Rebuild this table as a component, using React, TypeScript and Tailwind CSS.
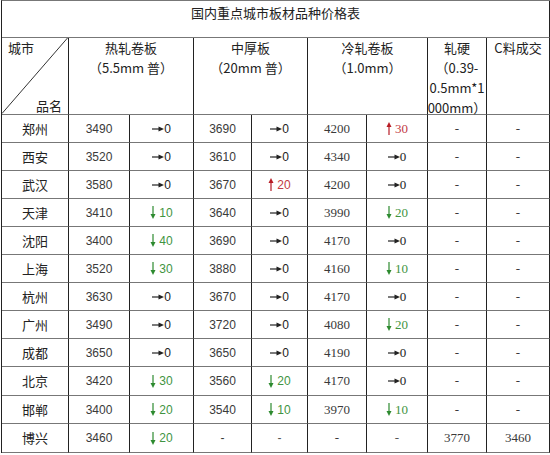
type Change = { dir: "flat" | "up" | "down"; value: string } | null;

type Row = {
  city: string;
  hot: string;
  hotChg: Change;
  mid: string;
  midChg: Change;
  cold: string;
  coldChg: Change;
  hard: string;
  c: string;
};

const flat: Change = { dir: "flat", value: "0" };
const up = (value: string): Change => ({ dir: "up", value });
const down = (value: string): Change => ({ dir: "down", value });

const rows: Row[] = [
  { city: "郑州", hot: "3490", hotChg: flat, mid: "3690", midChg: flat, cold: "4200", coldChg: up("30"), hard: "-", c: "-" },
  { city: "西安", hot: "3520", hotChg: flat, mid: "3610", midChg: flat, cold: "4340", coldChg: flat, hard: "-", c: "-" },
  { city: "武汉", hot: "3580", hotChg: flat, mid: "3670", midChg: up("20"), cold: "4200", coldChg: flat, hard: "-", c: "-" },
  { city: "天津", hot: "3410", hotChg: down("10"), mid: "3640", midChg: flat, cold: "3990", coldChg: down("20"), hard: "-", c: "-" },
  { city: "沈阳", hot: "3400", hotChg: down("40"), mid: "3690", midChg: flat, cold: "4170", coldChg: flat, hard: "-", c: "-" },
  { city: "上海", hot: "3520", hotChg: down("30"), mid: "3880", midChg: flat, cold: "4160", coldChg: down("10"), hard: "-", c: "-" },
  { city: "杭州", hot: "3630", hotChg: flat, mid: "3670", midChg: flat, cold: "4170", coldChg: flat, hard: "-", c: "-" },
  { city: "广州", hot: "3490", hotChg: flat, mid: "3720", midChg: flat, cold: "4080", coldChg: down("20"), hard: "-", c: "-" },
  { city: "成都", hot: "3650", hotChg: flat, mid: "3650", midChg: flat, cold: "4190", coldChg: flat, hard: "-", c: "-" },
  { city: "北京", hot: "3420", hotChg: down("30"), mid: "3560", midChg: down("20"), cold: "4170", coldChg: flat, hard: "-", c: "-" },
  { city: "邯郸", hot: "3400", hotChg: down("20"), mid: "3540", midChg: down("10"), cold: "3970", coldChg: down("10"), hard: "-", c: "-" },
  { city: "博兴", hot: "3460", hotChg: down("20"), mid: "-", midChg: null, cold: "-", coldChg: null, hard: "3770", c: "3460" },
];

// row heights so the grid lines land where the source image has them
const rowHeights = ["h-[28px]", "h-[28px]", "h-[28px]", "h-[28px]", "h-[28px]", "h-[28px]", "h-[28px]", "h-[28px]", "h-[28px]", "h-[29px]", "h-[28px]", "h-[29px]"];

const cell = "border-r border-b border-r-[#222] border-b-[#777]";
const cjk = "font-['Noto_Sans_CJK_SC',sans-serif] text-[#222]";
const sans = "font-['Liberation_Sans',Arial,sans-serif] text-[12px]";
const serif = "font-['Liberation_Serif','Noto_Sans_CJK_SC',serif] text-[13px]";

export default function App() {
  return (
    <div className="min-h-screen bg-white pl-px">
      <div className="grid w-[549px] grid-cols-[67px_61px_64px_58px_56px_59px_61px_59px_63px] border-l border-t border-l-[#222] border-t-[#777]">
        <div className={`${cell} ${cjk} col-span-9 h-[37px] pt-[2px] text-center text-[13px] leading-[20px]`}>
          国内重点城市板材品种价格表
        </div>

        <div className={`${cell} ${cjk} relative flex h-[77px] flex-col justify-between text-[13px]`}>
          <svg className="absolute inset-0 h-full w-full" viewBox="0 0 66 76" preserveAspectRatio="none">
            <line x1="65.5" y1="0" x2="0" y2="75.5" stroke="#333" strokeWidth="1" />
          </svg>
          <span className="pl-[6px] leading-[20px]">城市</span>
          <span className="self-end pb-px pr-[6px] leading-[14px]">品名</span>
        </div>
        <HeaderCell span="col-span-2" lines={["热轧卷板", "（5.5mm 普）"]} />
        <HeaderCell span="col-span-2" lines={["中厚板", "（20mm 普）"]} />
        <HeaderCell span="col-span-2" lines={["冷轧卷板", "（1.0mm）"]} />
        <HeaderCell span="" lines={["轧硬", "（0.39-", "0.5mm*1", "000mm）"]} />
        <HeaderCell span="" lines={["C料成交"]} />

        {rows.map((r, i) => (
          <DataRow key={r.city} row={r} height={rowHeights[i]} />
        ))}
      </div>
    </div>
  );
}

function HeaderCell({ span, lines }: { span: string; lines: string[] }) {
  return (
    <div className={`${cell} ${cjk} ${span} flex h-[77px] flex-col items-center text-[13px] leading-[20px]`}>
      {lines.map((l) => (
        <span key={l}>{l}</span>
      ))}
    </div>
  );
}

function DataRow({ row, height }: { row: Row; height: string }) {
  const box = `${cell} ${height} flex items-center justify-center`;
  return (
    <>
      <div className={`${box} ${cjk} text-[13px]`}>{row.city}</div>
      <div className={`${box} ${sans} text-[#3a3a3a]`}>{row.hot}</div>
      <div className={`${box} ${sans}`}>
        <ChangeMark change={row.hotChg} />
      </div>
      <div className={`${box} ${sans} text-[#3a3a3a]`}>{row.mid}</div>
      <div className={`${box} ${sans}`}>
        <ChangeMark change={row.midChg} />
      </div>
      <div className={`${box} ${serif} text-[#3a3a3a]`}>{row.cold}</div>
      <div className={`${box} ${serif}`}>
        <ChangeMark change={row.coldChg} />
      </div>
      <div className={`${box} ${serif} text-[#3a3a3a]`}>{row.hard}</div>
      <div className={`${box} ${serif} text-[#3a3a3a]`}>{row.c}</div>
    </>
  );
}

function ChangeMark({ change }: { change: Change }) {
  if (!change) return <span className="text-[#555]">-</span>;

  if (change.dir === "flat") {
    return (
      <span className="flex items-center text-[#222]">
        <svg width="12" height="6" viewBox="0 0 12 6">
          <line x1="0" y1="3" x2="8" y2="3" stroke="#222" strokeWidth="1.2" />
          <polygon points="6.5,0.5 12,3 6.5,5.5" fill="#222" />
        </svg>
        {change.value}
      </span>
    );
  }

  if (change.dir === "up") {
    return (
      <span className="flex items-center gap-[3px] text-[#c23a44]">
        <svg width="6" height="13" viewBox="0 0 6 13">
          <line x1="3" y1="4" x2="3" y2="13" stroke="#b81c25" strokeWidth="1.2" />
          <polygon points="0.5,5 3,0 5.5,5" fill="#b81c25" />
        </svg>
        {change.value}
      </span>
    );
  }

  return (
    <span className="flex items-center gap-[3px] text-[#3f9441]">
      <svg width="6" height="13" viewBox="0 0 6 13">
        <line x1="3" y1="0" x2="3" y2="9" stroke="#2d8a2f" strokeWidth="1.2" />
        <polygon points="0.5,8 3,13 5.5,8" fill="#2d8a2f" />
      </svg>
      {change.value}
    </span>
  );
}
